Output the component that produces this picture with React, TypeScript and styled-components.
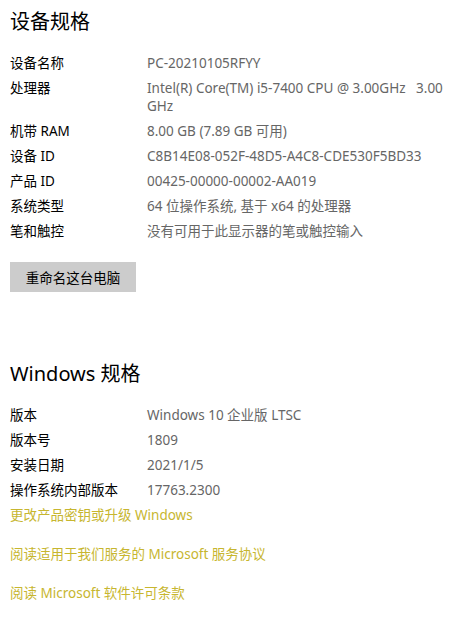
import React, { FC } from "react"
import styled, { createGlobalStyle } from "styled-components"

const GlobalStyle = createGlobalStyle`
  body {
    margin: 0;
    background: #fff;
    font-family: "Noto Sans", "Noto Sans CJK SC", sans-serif;
  }
`

type Spec = { label: string; value: string }

const deviceSpecs: Spec[] = [
  { label: "设备名称", value: "PC-20210105RFYY" },
  { label: "处理器", value: "Intel(R) Core(TM) i5-7400 CPU @ 3.00GHz\u00a0\u00a0 3.00 GHz" },
  { label: "机带 RAM", value: "8.00 GB (7.89 GB 可用)" },
  { label: "设备 ID", value: "C8B14E08-052F-48D5-A4C8-CDE530F5BD33" },
  { label: "产品 ID", value: "00425-00000-00002-AA019" },
  { label: "系统类型", value: "64 位操作系统, 基于 x64 的处理器" },
  { label: "笔和触控", value: "没有可用于此显示器的笔或触控输入" },
]

const windowsSpecs: Spec[] = [
  { label: "版本", value: "Windows 10 企业版 LTSC" },
  { label: "版本号", value: "1809" },
  { label: "安装日期", value: "2021/1/5" },
  { label: "操作系统内部版本", value: "17763.2300" },
]

const SpecList: FC<{ items: Spec[] }> = ({ items }) => (
  <List>
    {items.map(item => (
      <Row key={item.label}>
        <Label>{item.label}</Label>
        <Value>{item.value}</Value>
      </Row>
    ))}
  </List>
)

const App: FC = () => (
  <>
    <GlobalStyle />
    <Page>
      <Title>设备规格</Title>
      <SpecList items={deviceSpecs} />
      <Button>重命名这台电脑</Button>

      <Title $spaced>Windows 规格</Title>
      <SpecList items={windowsSpecs} />
      <Links>
        <LinkText href="#">更改产品密钥或升级 Windows</LinkText>
        <LinkText href="#">阅读适用于我们服务的 Microsoft 服务协议</LinkText>
        <LinkText href="#">阅读 Microsoft 软件许可条款</LinkText>
      </Links>
    </Page>
  </>
)

export default App

const Page = styled.div`
  display: flex;
  flex-direction: column;
  align-items: flex-start;
  padding: 8px 10px 0;
  width: 456px;
  box-sizing: border-box;
`

const Title = styled.h2<{ $spaced?: boolean }>`
  margin: ${p => (p.$spaced ? "68px" : "0")} 0 0;
  font-size: 20px;
  line-height: 28px;
  font-weight: 400;
  color: #000;
`

const List = styled.div`
  display: flex;
  flex-direction: column;
  gap: 7px;
  margin-top: 18px;
  width: 100%;
`

const Row = styled.div`
  display: grid;
  grid-template-columns: 137px 1fr;
  font-size: 13.5px;
  line-height: 18px;
`

const Label = styled.span`
  color: #000;
`

const Value = styled.span`
  color: #666;
`

const Button = styled.button`
  margin-top: 22px;
  width: 126px;
  height: 30px;
  border: none;
  background: #ccc;
  color: #000;
  font-family: inherit;
  font-size: 13.5px;
  padding: 0;
`

const Links = styled.div`
  display: flex;
  flex-direction: column;
  gap: 21px;
  margin-top: 7px;
`

const LinkText = styled.a`
  color: #c7b62f;
  font-size: 13.5px;
  line-height: 18px;
  text-decoration: none;
`
